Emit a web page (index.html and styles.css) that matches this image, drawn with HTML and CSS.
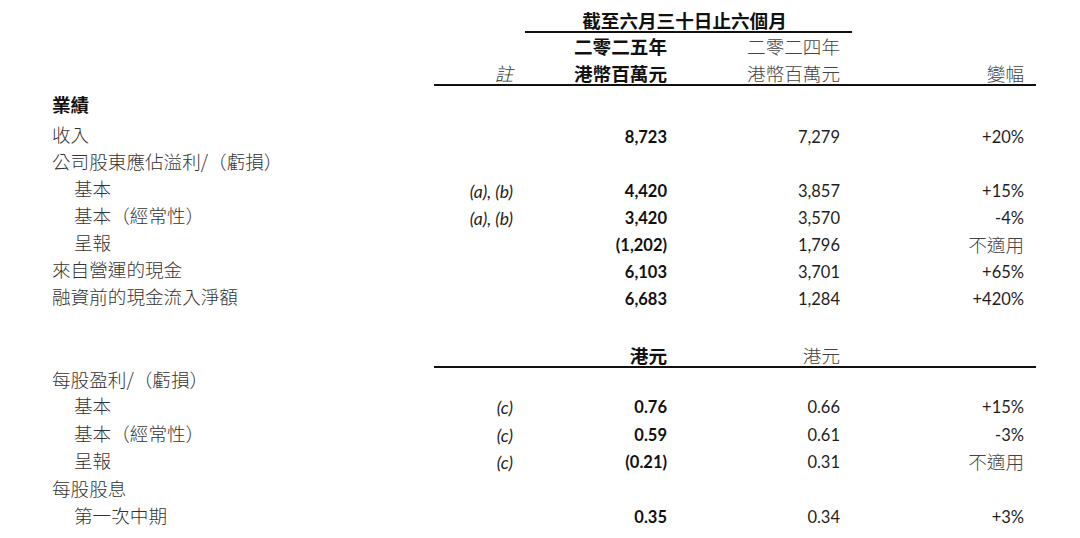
FILE: index.html
```html
<!DOCTYPE html>
<html lang="zh-Hant">
<head>
<meta charset="utf-8">
<title>業績摘要</title>
<link rel="stylesheet" href="styles.css">
</head>
<body>
<table class="fin">
  <colgroup>
    <col class="c-label">
    <col class="c-note">
    <col class="c-cur">
    <col class="c-prev">
    <col class="c-chg">
  </colgroup>
  <thead>
    <tr class="h1">
      <td></td>
      <td></td>
      <td colspan="2" class="period rule">截至六月三十日止六個月</td>
      <td></td>
    </tr>
    <tr class="h2">
      <td></td>
      <td></td>
      <td class="num cjk bold">二零二五年</td>
      <td class="num cjk lite">二零二四年</td>
      <td></td>
    </tr>
    <tr class="h3">
      <td></td>
      <td class="num cjk ital rule">註</td>
      <td class="num cjk bold rule">港幣百萬元</td>
      <td class="num cjk lite rule">港幣百萬元</td>
      <td class="num cjk lite rule">變幅</td>
    </tr>
  </thead>
  <tbody>
    <tr class="sect">
      <td class="label bold">業績</td><td></td><td></td><td></td><td></td>
    </tr>
    <tr class="r">
      <td class="label">收入</td><td></td>
      <td class="num b">8,723</td><td class="num">7,279</td><td class="num">+20%</td>
    </tr>
    <tr class="r">
      <td class="label">公司股東應佔溢利/（虧損）</td><td></td><td></td><td></td><td></td>
    </tr>
    <tr class="r">
      <td class="label sub">基本</td><td class="num note">(a), (b)</td>
      <td class="num b">4,420</td><td class="num">3,857</td><td class="num">+15%</td>
    </tr>
    <tr class="r">
      <td class="label sub">基本（經常性）</td><td class="num note">(a), (b)</td>
      <td class="num b">3,420</td><td class="num">3,570</td><td class="num">-4%</td>
    </tr>
    <tr class="r">
      <td class="label sub">呈報</td><td></td>
      <td class="num b">(1,202)</td><td class="num">1,796</td><td class="num cjk lite">不適用</td>
    </tr>
    <tr class="r">
      <td class="label">來自營運的現金</td><td></td>
      <td class="num b">6,103</td><td class="num">3,701</td><td class="num">+65%</td>
    </tr>
    <tr class="r">
      <td class="label">融資前的現金流入淨額</td><td></td>
      <td class="num b">6,683</td><td class="num">1,284</td><td class="num">+420%</td>
    </tr>
    <tr class="unit">
      <td></td>
      <td class="rule"></td>
      <td class="num cjk bold rule">港元</td>
      <td class="num cjk lite rule">港元</td>
      <td class="rule"></td>
    </tr>
    <tr class="r2 first">
      <td class="label">每股盈利/（虧損）</td><td></td><td></td><td></td><td></td>
    </tr>
    <tr class="r2">
      <td class="label sub">基本</td><td class="num note">(c)</td>
      <td class="num b">0.76</td><td class="num">0.66</td><td class="num">+15%</td>
    </tr>
    <tr class="r2">
      <td class="label sub">基本（經常性）</td><td class="num note">(c)</td>
      <td class="num b">0.59</td><td class="num">0.61</td><td class="num">-3%</td>
    </tr>
    <tr class="r2">
      <td class="label sub">呈報</td><td class="num note">(c)</td>
      <td class="num b">(0.21)</td><td class="num">0.31</td><td class="num cjk lite">不適用</td>
    </tr>
    <tr class="r2">
      <td class="label">每股股息</td><td></td><td></td><td></td><td></td>
    </tr>
    <tr class="r2">
      <td class="label sub">第一次中期</td><td></td>
      <td class="num b">0.35</td><td class="num">0.34</td><td class="num">+3%</td>
    </tr>
  </tbody>
</table>
</body>
</html>
```

FILE: styles.css
```css
html, body {
  margin: 0;
  padding: 0;
  background: #ffffff;
}

body {
  padding: 6px 0 0 50px;
  color: #2b2b2b;
  font-family: "Noto Sans CJK TC", "Noto Sans CJK SC", sans-serif;
}

.fin {
  table-layout: fixed;
  width: 986px;
  border-collapse: separate;
  border-spacing: 0;
}

.c-label { width: 384px; }
.c-note  { width: 91px; }
.c-cur   { width: 154px; }
.c-prev  { width: 173px; }
.c-chg   { width: 184px; }

.fin td {
  padding: 0;
  vertical-align: middle;
  white-space: nowrap;
  font-size: 16.5px;
  line-height: 27px;
}

.fin .label {
  padding-left: 2px;
  font-family: "Noto Sans CJK TC", "Noto Sans CJK SC", sans-serif;
  font-size: 18.6px;
  font-weight: 300;
  color: #333;
}

.fin .label.sub {
  padding-left: 24px;
}

.fin .label.bold {
  font-weight: 700;
  color: #111;
}

.fin .num {
  text-align: right;
  padding-right: 12px;
  font-family: Lato, "Liberation Sans", sans-serif;
  color: #1e1e1e;
}

.fin .num.b {
  font-weight: 700;
  color: #111;
}

.fin .note {
  font-style: italic;
  font-size: 17.5px;
}

.fin .cjk {
  font-family: "Noto Sans CJK TC", "Noto Sans CJK SC", sans-serif;
  font-size: 18.6px;
}

.fin .cjk.bold {
  font-weight: 700;
  color: #111;
}

.fin .cjk.lite {
  font-weight: 300;
  color: #444;
}

.fin .cjk.ital {
  font-style: italic;
  font-weight: 300;
  color: #333;
}

.fin .rule {
  box-shadow: inset 0 -2px 0 #111;
}

.fin .period {
  text-align: center;
  font-weight: 700;
  font-size: 18.6px;
  color: #111;
  padding-right: 8px;
}

.h1 td { line-height: 27px; }
.h2 td { line-height: 26px; }
.h3 td { line-height: 27px; }

.sect td {
  padding-top: 3px;
  line-height: 35px;
}

.sect td.label {
  line-height: 30px;
  padding-bottom: 5px;
}

.r td { line-height: 27px; }

.r td.label {
  line-height: 20px;
  padding-bottom: 7px;
}

.r td.cjk {
  line-height: 23px;
  padding-bottom: 4px;
}

.unit td {
  padding-top: 31px;
  padding-bottom: 2px;
  line-height: 22px;
}

.r2 td { line-height: 27.5px; }
.r2.first td { line-height: 26px; }

.r2 td.label {
  line-height: 21.5px;
  padding-bottom: 6px;
}

.r2.first td.label {
  line-height: 21px;
  padding-bottom: 5px;
}

.r2 td.cjk {
  line-height: 23.5px;
  padding-bottom: 4px;
}
```
